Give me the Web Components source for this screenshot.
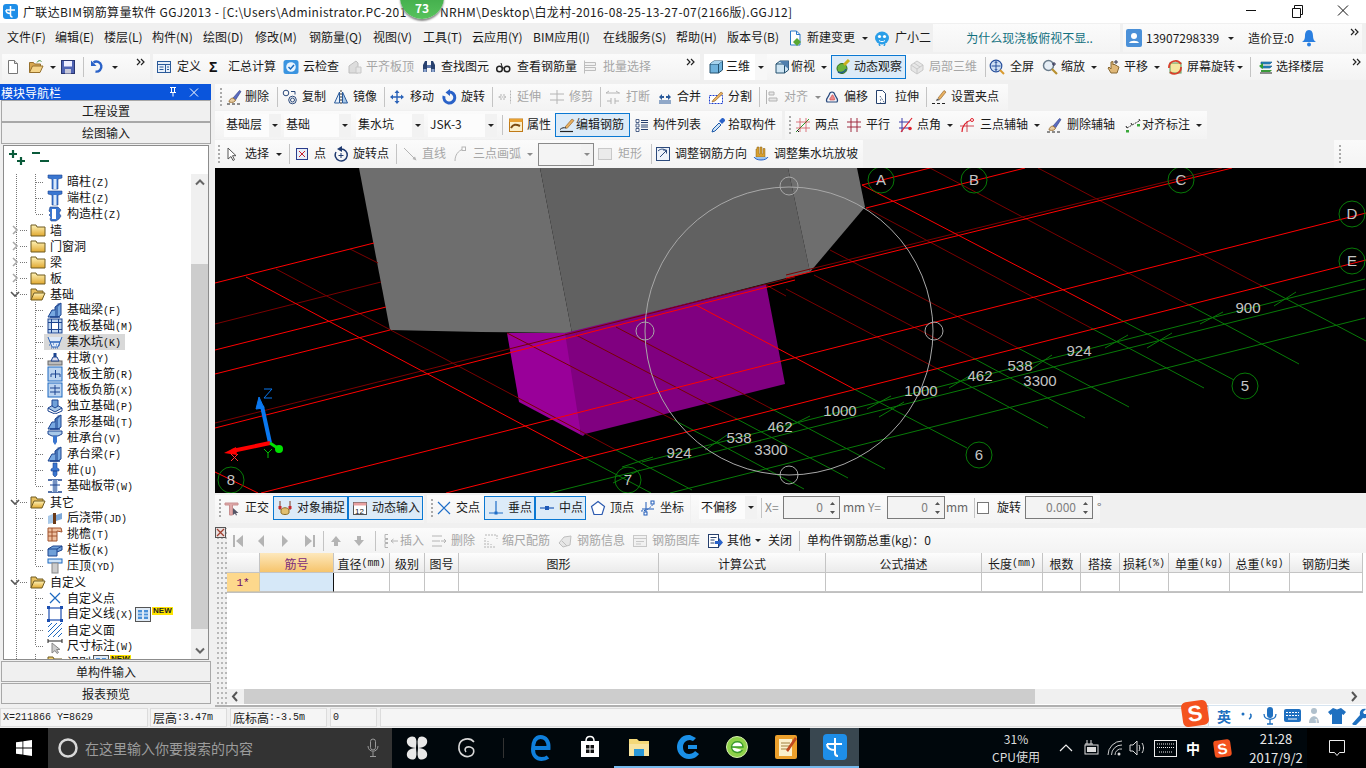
<!DOCTYPE html>
<html lang="zh">
<head>
<meta charset="utf-8">
<title>GGJ2013</title>
<style>
  html, body { margin: 0; padding: 0; }
  body {
    width: 1366px; height: 768px; overflow: hidden; background: #f0f0f0; color: #1a1a1a;
    font: 12px/16px "Noto Sans CJK SC", "Liberation Sans", sans-serif;
    display: flex; flex-direction: column;
  }
</style>
</head>
<body>

<title-bar>
  <span style="letter-spacing:.36px">广联达BIM钢筋算量软件 GGJ2013 - [C:\Users\Administrator.PC-201</span>
  <span style="position:absolute;left:440px;letter-spacing:.36px">NRHM\Desktop\白龙村-2016-08-25-13-27-07(2166版).GGJ12]</span>
</title-bar>

<menu-bar>
  <menu-item style="width:48px">文件(F)</menu-item>
  <menu-item style="width:49px">编辑(E)</menu-item>
  <menu-item style="width:48px">楼层(L)</menu-item>
  <menu-item style="width:51px">构件(N)</menu-item>
  <menu-item style="width:52px">绘图(D)</menu-item>
  <menu-item style="width:54px">修改(M)</menu-item>
  <menu-item style="width:64px">钢筋量(Q)</menu-item>
  <menu-item style="width:50px">视图(V)</menu-item>
  <menu-item style="width:49px">工具(T)</menu-item>
  <menu-item style="width:61px">云应用(Y)</menu-item>
  <menu-item style="width:70px">BIM应用(I)</menu-item>
  <menu-item style="width:73px">在线服务(S)</menu-item>
  <menu-item style="width:51px">帮助(H)</menu-item>
  <menu-item style="width:60px">版本号(B)</menu-item>
  <tool-btn icon="change" style="width:69px">新建变更</tool-btn>
  <tb-caret style="width:18px"></tb-caret>
  <tool-btn icon="robot" style="width:52px;--g:5px">广小二</tool-btn>
  <hint-box>为什么现浇板俯视不显..</hint-box>
  <user-box phone="13907298339" beans="造价豆:0"></user-box>
</menu-bar>

<tool-row style="height:27px;padding-top:1px;margin-bottom:4px">
  <tool-section style="width:148px;margin-left:2px;padding-left:3px">
    <tool-btn icon="new" style="width:23px"></tool-btn>
    <tool-btn icon="open" style="width:17px"></tool-btn>
    <tb-caret style="width:15px"></tb-caret>
    <tool-btn icon="save" style="width:18px"></tool-btn>
    <tb-sep style="width:11px"></tb-sep>
    <tool-btn icon="undo" style="width:18px"></tool-btn>
    <tb-caret style="width:15px"></tb-caret>
    <tb-more></tb-more>
  </tool-section>
  <tool-section style="width:547px;margin-left:3px;padding-left:3px">
    <tool-btn icon="define" style="width:51px;--g:5px">定义</tool-btn>
    <tool-btn icon="sigma" style="width:76px;--g:5px">汇总计算</tool-btn>
    <tool-btn icon="cloud" style="width:64px">云检查</tool-btn>
    <tool-btn icon="flush" disabled style="width:74px;--g:3px">平齐板顶</tool-btn>
    <tool-btn icon="find" style="width:74px">查找图元</tool-btn>
    <tool-btn icon="glasses" style="width:87px;--g:6px">查看钢筋量</tool-btn>
    <tool-btn icon="batch" disabled style="width:72px;--g:5px">批量选择</tool-btn>
    <tb-more></tb-more>
  </tool-section>
  <tool-section style="width:662px;margin-left:4px">
    <tool-btn icon="cube" style="width:51px;height:26px;padding-left:4px;background:#fff;--g:2px">三维</tool-btn>
    <tb-caret style="width:12px;height:26px;background:#f7f7f7"></tb-caret>
    <tool-btn icon="cubet" style="width:44px;margin-left:7px;--g:1px">俯视</tool-btn>
    <tb-caret style="width:12px"></tb-caret>
    <tool-btn icon="orbit" active style="width:75px;margin-left:1px;--g:3px">动态观察</tool-btn>
    <tool-btn icon="local3d" disabled style="width:72px;margin-left:3px">局部三维</tool-btn>
    <tb-sep style="width:8px"></tb-sep>
    <tool-btn icon="full" style="width:53px;--g:5px">全屏</tool-btn>
    <tool-btn icon="zoom" style="width:46px;--g:3px">缩放</tool-btn>
    <tb-caret style="width:12px"></tb-caret>
    <tool-btn icon="pan" style="width:46px;margin-left:5px;--g:3px">平移</tool-btn>
    <tb-caret style="width:12px"></tb-caret>
    <tool-btn icon="screenrot" style="width:68px;margin-left:4px">屏幕旋转</tool-btn>
    <tb-caret style="width:10px"></tb-caret>
    <tb-sep style="width:11px"></tb-sep>
    <tool-btn icon="floors" style="width:72px;margin-left:2px;--g:2px">选择楼层</tool-btn>
    <tb-more></tb-more>
  </tool-section>
</tool-row>

<main-area>
  <nav-panel slot="nav" heading="模块导航栏">
    <nav-tab slot="top">工程设置</nav-tab>
    <nav-tab slot="top">绘图输入</nav-tab>
    <tree-node icon="col" leaf key="Z">暗柱</tree-node>
    <tree-node icon="col" leaf key="Z">端柱</tree-node>
    <tree-node icon="comp" leaf last key="Z">构造柱</tree-node>
    <tree-node>墙</tree-node>
    <tree-node>门窗洞</tree-node>
    <tree-node>梁</tree-node>
    <tree-node>板</tree-node>
    <tree-node open>基础</tree-node>
    <tree-node icon="beam" leaf key="F">基础梁</tree-node>
    <tree-node icon="raft" leaf key="M">筏板基础</tree-node>
    <tree-node icon="pit" leaf selected key="K">集水坑</tree-node>
    <tree-node icon="pier" leaf key="Y">柱墩</tree-node>
    <tree-node icon="rmain" leaf key="R">筏板主筋</tree-node>
    <tree-node icon="rneg" leaf key="X">筏板负筋</tree-node>
    <tree-node icon="iso" leaf key="P">独立基础</tree-node>
    <tree-node icon="beam" leaf key="T">条形基础</tree-node>
    <tree-node icon="capv" leaf key="V">桩承台</tree-node>
    <tree-node icon="beam" leaf key="F">承台梁</tree-node>
    <tree-node icon="pile" leaf key="U">桩</tree-node>
    <tree-node icon="band" leaf last key="W">基础板带</tree-node>
    <tree-node open>其它</tree-node>
    <tree-node icon="post" leaf key="JD">后浇带</tree-node>
    <tree-node icon="eave" leaf key="T">挑檐</tree-node>
    <tree-node icon="para" leaf key="K">栏板</tree-node>
    <tree-node icon="coping" leaf last key="YD">压顶</tree-node>
    <tree-node open>自定义</tree-node>
    <tree-node icon="xpt" leaf>自定义点</tree-node>
    <tree-node icon="xline" leaf key="X" fresh>自定义线</tree-node>
    <tree-node icon="xface" leaf>自定义面</tree-node>
    <tree-node icon="dim" leaf last key="W">尺寸标注</tree-node>
    <tree-node icon="folder" leaf fresh>识别</tree-node>
    <nav-tab slot="bottom">单构件输入</nav-tab>
    <nav-tab slot="bottom">报表预览</nav-tab>
  </nav-panel>

  <tool-row style="height:26px;margin-bottom:1px">
    <tool-section>
      <tb-sep grip style="width:11px"></tb-sep>
      <tool-btn icon="brush" style="width:46px;--g:3px">删除</tool-btn>
      <tb-sep style="width:10px"></tb-sep>
      <tool-btn icon="copy" style="width:51px">复制</tool-btn>
      <tool-btn icon="mirror" style="width:47px">镜像</tool-btn>
      <tb-sep style="width:9px"></tb-sep>
      <tool-btn icon="move" style="width:52px;--g:5px">移动</tool-btn>
      <tool-btn icon="rot" style="width:47px">旋转</tool-btn>
      <tb-sep style="width:9px"></tb-sep>
      <tool-btn icon="extend" disabled style="width:52px">延伸</tool-btn>
      <tool-btn icon="trim" disabled style="width:47px">修剪</tool-btn>
      <tb-sep style="width:9px"></tb-sep>
      <tool-btn icon="brk" disabled style="width:52px;--g:5px">打断</tool-btn>
      <tool-btn icon="merge" style="width:51px">合并</tool-btn>
      <tool-btn icon="split" style="width:47px">分割</tool-btn>
      <tb-sep style="width:9px"></tb-sep>
      <tool-btn icon="align" disabled style="width:48px">对齐</tool-btn>
      <tb-caret style="width:12px;opacity:.5"></tb-caret>
      <tool-btn icon="offset" style="width:49px">偏移</tool-btn>
      <tool-btn icon="stretch" style="width:49px;--g:6px">拉伸</tool-btn>
      <tb-sep style="width:9px"></tb-sep>
      <tool-btn icon="setgrip" style="width:75px">设置夹点</tool-btn>
    </tool-section>
  </tool-row>

  <tool-row style="height:28px;margin-bottom:1px">
    <tool-section style="padding-left:9px">
      <tb-select style="width:57px">基础层</tb-select>
      <tb-select style="width:67px;margin-left:3px">基础</tb-select>
      <tb-select style="width:68px;margin-left:5px">集水坑</tb-select>
      <tb-select style="width:69px;margin-left:4px">JSK-3</tb-select>
      <tb-sep style="width:11px"></tb-sep>
      <tool-btn icon="prop" style="width:46px;--g:3px">属性</tool-btn>
      <tool-btn icon="editbar" active style="width:75px;margin-left:1px;--g:1px">编辑钢筋</tool-btn>
      <tool-btn icon="list" style="width:76px;margin-left:4px;--g:3px">构件列表</tool-btn>
      <tool-btn icon="pick" style="width:70px;--g:2px">拾取构件</tool-btn>
    </tool-section>
    <tool-section style="margin-left:3px">
      <tb-sep grip style="width:10px"></tb-sep>
      <tool-btn icon="twopt" style="width:51px">两点</tool-btn>
      <tool-btn icon="parallel" style="width:52px">平行</tool-btn>
      <tool-btn icon="ptangle" style="width:46px;--g:3px">点角</tool-btn>
      <tb-caret style="width:12px"></tb-caret>
      <tool-btn icon="threept" style="width:72px;margin-left:3px;--g:5px">三点辅轴</tool-btn>
      <tb-caret style="width:12px"></tb-caret>
      <tool-btn icon="brush" style="width:79px;margin-left:3px;--g:5px">删除辅轴</tool-btn>
      <tool-btn icon="dimalign" style="width:68px;--g:1px">对齐标注</tool-btn>
      <tb-caret style="width:12px"></tb-caret>
    </tool-section>
  </tool-row>

  <tool-row style="height:28px">
    <tool-section>
      <tb-sep grip style="width:8px"></tb-sep>
      <tool-btn icon="arrow" style="width:50px;--g:6px">选择</tool-btn>
      <tb-caret style="width:12px"></tb-caret>
      <tb-sep style="width:9px"></tb-sep>
      <tool-btn icon="pointx" style="width:39px">点</tool-btn>
      <tool-btn icon="rotpt" style="width:59px">旋转点</tool-btn>
      <tb-sep style="width:9px"></tb-sep>
      <tool-btn icon="linei" disabled style="width:50px;margin-left:1px">直线</tool-btn>
      <tool-btn icon="arc" disabled style="width:72px;--g:5px">三点画弧</tool-btn>
      <tb-caret style="width:12px;opacity:.5"></tb-caret>
      <tb-select boxed style="width:56px;margin-left:2px"></tb-select>
      <tool-btn icon="rectchk" disabled style="width:50px;margin-left:3px;--g:5px">矩形</tool-btn>
      <tb-sep style="width:8px"></tb-sep>
      <tool-btn icon="adjdir" style="width:98px">调整钢筋方向</tool-btn>
      <tool-btn icon="adjslope" style="width:108px;--g:5px">调整集水坑放坡</tool-btn>
    </tool-section>
    <tool-section style="width:32px;margin-left:auto;padding:0;background:linear-gradient(#fafafa,#f4f4f4)">
      <tb-sep grip style="width:11px"></tb-sep>
    </tool-section>
  </tool-row>

  <drawing-canvas></drawing-canvas>

  <tool-row style="height:28px;margin:2px 0 5px">
    <tool-section style="width:209px;padding-bottom:3px">
      <tb-sep grip style="width:9px"></tb-sep>
      <tool-btn icon="ortho" style="width:47px;--g:5px">正交</tool-btn>
      <tool-btn icon="snapobj" active style="width:75px;margin-left:2px">对象捕捉</tool-btn>
      <tool-btn icon="dyninp" active style="width:75px">动态输入</tool-btn>
    </tool-section>
    <tool-section style="width:263px;margin-left:3px;padding-bottom:3px">
      <tb-sep grip style="width:9px"></tb-sep>
      <tool-btn icon="cross" style="width:48px">交点</tool-btn>
      <tool-btn icon="perp" active style="width:51px">垂点</tool-btn>
      <tool-btn icon="mid" active style="width:51px">中点</tool-btn>
      <tool-btn icon="vertex" style="width:50px;margin-left:4px">顶点</tool-btn>
      <tool-btn icon="coord" style="width:48px">坐标</tool-btn>
    </tool-section>
    <tool-section style="width:409px;margin-left:1px;padding-left:8px;padding-bottom:3px">
      <tb-select style="width:58px">不偏移</tb-select>
      <tb-sep style="width:8px"></tb-sep>
      <tb-label style="width:18px;color:#8a8a8a">X=</tb-label>
      <spin-box style="width:57px" value="0"></spin-box>
      <tb-label style="width:25px;margin-left:3px;color:#666">mm</tb-label>
      <tb-label style="width:19px;color:#8a8a8a">Y=</tb-label>
      <spin-box style="width:58px" value="0"></spin-box>
      <tb-label style="width:26px;margin-left:1px;color:#666">mm</tb-label>
      <tb-sep style="width:5px"></tb-sep>
      <tb-check></tb-check>
      <tb-label style="width:28px;margin-left:8px">旋转</tb-label>
      <spin-box style="width:68px" value="0.000"></spin-box>
      <tb-label style="margin-left:4px;color:#666">°</tb-label>
    </tool-section>
  </tool-row>

  <rebar-panel>
    <tool-row style="height:25px">
      <tool-section style="width:100%;padding-left:3px">
        <tool-btn icon="first" disabled style="width:23px"></tool-btn>
        <tool-btn icon="prev" disabled style="width:24px"></tool-btn>
        <tool-btn icon="next" disabled style="width:25px"></tool-btn>
        <tool-btn icon="last" disabled style="width:17px"></tool-btn>
        <tb-sep style="width:9px"></tb-sep>
        <tool-btn icon="up" disabled style="width:23px"></tool-btn>
        <tool-btn icon="down" disabled style="width:20px"></tool-btn>
        <tb-sep style="width:9px"></tb-sep>
        <tool-btn icon="ins" disabled style="width:48px;margin-left:3px;--g:1px">插入</tool-btn>
        <tool-btn icon="rem" disabled style="width:52px">删除</tool-btn>
        <tool-btn icon="scale" disabled style="width:74px;--g:3px">缩尺配筋</tool-btn>
        <tool-btn icon="info" disabled style="width:75px">钢筋信息</tool-btn>
        <tool-btn icon="lib" disabled style="width:75px">钢筋图库</tool-btn>
        <tool-btn icon="other" style="width:46px">其他</tool-btn>
        <tb-caret style="width:9px"></tb-caret>
        <tb-label style="width:28px;margin-left:6px">关闭</tb-label>
        <tb-sep style="width:6px"></tb-sep>
        <tb-label style="margin-left:5px">单构件钢筋总重(kg)：0</tb-label>
      </tool-section>
    </tool-row>
    <rebar-grid></rebar-grid>
  </rebar-panel>
</main-area>

<stat-bar>
  <stat-cell style="width:148px" mono>X=211866 Y=8629</stat-cell>
  <stat-cell style="width:77px;margin-left:2px" label="层高" mono>:3.47m</stat-cell>
  <stat-cell style="width:97px;margin-left:3px" label="底标高" mono>:-3.5m</stat-cell>
  <stat-cell style="width:47px;margin-left:3px" mono>0</stat-cell>
  <stat-cell style="flex:1;margin-left:3px"></stat-cell>
</stat-bar>
<ime-bar></ime-bar>

<win-taskbar></win-taskbar>

<script>
// ---- iconos compartidos, todos en una caja de 16x16 ----
const ICONS = {
  new: `<path d="M3.5 1.5h6l3 3v10h-9z" fill="#fff" stroke="#777"/><path d="M9.5 1.5v3h3" fill="#ddd" stroke="#777"/>`,
  open: `<path d="M1.5 13.5v-10h4l1 1.5h6v2" fill="#d8a850" stroke="#96702c"/><path d="M1.5 13.5l3-6.5h10.5l-3 6.5z" fill="#f4d488" stroke="#96702c"/><path d="M9 3.5c1-2 3-2.500 4.500-1" fill="none" stroke="#3f8f3f"/>`,
  save: `<rect x="1.500" y="1.500" width="13" height="13" fill="#5064b4" stroke="#2a3670"/><rect x="4" y="2" width="8" height="5.500" fill="#eef"/><rect x="5" y="10" width="6" height="4.500" fill="#c8c8d8"/>`,
  undo: `<path d="M4.500 3.500a5 5 0 1 1 2 9" fill="none" stroke="#2a62c8" stroke-width="2.400"/><path d="M2 1.500v5.500h5.500z" fill="#2a62c8"/>`,
  define: `<rect x="1.500" y="2.500" width="13" height="11" fill="#e8f0fa" stroke="#2a5a9a"/><path d="M1.500 5.500h13M9.500 5.500v8M3.500 8h4M3.500 10.500h4M11 8h2M11 10.500h2" stroke="#2a5a9a" fill="none"/>`,
  sigma: `<text x="2" y="13" font-size="14" font-weight="bold" font-family="Liberation Sans" fill="#111">Σ</text>`,
  cloud: `<rect x=".5" y="1" width="15" height="14" rx="2.500" fill="#3a94e0"/><circle cx="8" cy="8" r="4.800" fill="#e8f4ff"/><path d="M5.500 8l2 2 3.500-4" stroke="#1a6cc0" stroke-width="1.500" fill="none"/>`,
  flush: `<path d="M2 14V7l7-5 2 2v10z" fill="#ccc" stroke="#999"/><path d="M9 8h5v6H9z" fill="#ddd" stroke="#aaa"/>`,
  find: `<path d="M2 13V6l2-4h2v11zM14 13V6l-2-4h-2v11z" fill="#27406e"/><rect x="6" y="6" width="4" height="3" fill="#5c76a8"/><rect x="2.500" y="10" width="3" height="3" fill="#8aa2cc"/><rect x="10.500" y="10" width="3" height="3" fill="#8aa2cc"/>`,
  glasses: `<circle cx="4.500" cy="10" r="2.800" fill="none" stroke="#222" stroke-width="1.500"/><circle cx="12" cy="10" r="2.800" fill="none" stroke="#222" stroke-width="1.500"/><path d="M7 9h2.500M7.500 9L6 4" stroke="#222" fill="none"/>`,
  batch: `<path d="M2.500 1.500v13M2.500 3.500h11v3h-11M2.500 8.500h11v3h-11" stroke="#999" fill="#eee"/>`,
  cube: `<path d="M2 5l4-3h8.500v9L10.500 14H2z" fill="#6fb2dc" stroke="#24506e"/><path d="M2 5h8.500v9M10.500 5l4-3" fill="none" stroke="#24506e"/><path d="M2 5l4-3h8.500l-4 3z" fill="#a8d4ee"/>`,
  cubet: `<path d="M2 5l4-3h8.500v9L10.500 14H2z" fill="#cfe5f3" stroke="#24506e"/><path d="M2 5h8.500v9M10.500 5l4-3" fill="none" stroke="#24506e"/><path d="M5 2h9.500v8z" fill="#4f7fae"/>`,
  orbit: `<circle cx="7" cy="9.500" r="5" fill="#6cb33a" stroke="#2f6d1c"/><path d="M9 6l5-5" stroke="#c9b01c" stroke-width="3"/><path d="M3 13c3 1.500 7 0 8-3" stroke="#1f5a8c" fill="none" stroke-width="1.500"/>`,
  local3d: `<path d="M2 6l6-4 6 4v5l-6 4-6-4z" fill="#ddd" stroke="#aaa"/><path d="M2 6l6 4 6-4M8 10v5M5 4l6 4" stroke="#aaa" fill="none"/>`,
  full: `<circle cx="7" cy="7" r="5.800" fill="#cfe0f4" stroke="#28509c" stroke-width="1.200"/><path d="M7 2.500v9M2.500 7h9M7 2.500L5.800 4M7 2.500L8.200 4M7 11.500L5.800 10M7 11.500L8.200 10" stroke="#28509c" fill="none"/><path d="M11 11l4 4" stroke="#d89a30" stroke-width="2"/>`,
  zoom: `<circle cx="6.500" cy="6.500" r="5" fill="#e6eef6" stroke="#6a7c8c" stroke-width="1.500"/><path d="M10 10l5 5" stroke="#b89030" stroke-width="2.200"/><path d="M12 3v4M10 5h4" stroke="#335" stroke-width="1"/>`,
  pan: `<path d="M3 9l3 5h6l2-6-2-1-1-1-1 0-1-1-1 1V2.500L6 3v7L4 8z" fill="#e0b878" stroke="#8a6a34"/><path d="M11 1v4M9 3h4" stroke="#334" fill="none"/>`,
  screenrot: `<rect x="3" y="4" width="11" height="10" fill="#f6e6a0" stroke="#5a9a5a"/><path d="M2 9a6.500 6.500 0 0 1 12-4" fill="none" stroke="#d8402c" stroke-width="1.800"/><path d="M14 8a6.500 6.500 0 0 1-11 5" fill="none" stroke="#d8402c" stroke-width="1.800"/>`,
  floors: `<path d="M3 3h11l-2 2H3zM3 7h11l-2 2H3z" fill="#2a8ac8" stroke="#14507c" stroke-width=".6"/><path d="M3 11h11l-2 2H3z" fill="#3a9a3a"/><path d="M1 7l4-3v6z" fill="#2f9f2f"/><path d="M2 14h12" stroke="#222"/>`,
  change: `<path d="M3.500 1h6l3.500 3.500V15H3.500z" fill="#fff" stroke="#2a78c8"/><path d="M9.500 1v3.500H13" fill="none" stroke="#2a78c8"/><path d="M10 8l4 4-4 4-4-4z" fill="#5aa832"/>`,
  robot: `<ellipse cx="8" cy="8" rx="7" ry="6.500" fill="#2a9ee8"/><circle cx="5.500" cy="6.500" r="1.600" fill="#fff"/><circle cx="10.500" cy="6.500" r="1.600" fill="#fff"/><path d="M5 10.500c2 1.500 4 1.500 6 0" stroke="#fff" fill="none"/><path d="M5 14l1 2M11 14l-1 2" stroke="#2a9ee8" stroke-width="1.500"/>`,
  brush: `<path d="M7 9L13.500 1.500l1.500 1L9.500 11z" fill="#5a6cc0" stroke="#2c3a80" stroke-width=".6"/><path d="M3 13c0-2 2-4 4-4l2.500 2c-.5 2-2.500 3-6.500 2z" fill="#e8cca0" stroke="#a07840"/><path d="M1 15h3M6 15h3M11 15h3" stroke="#222"/>`,
  copy: `<circle cx="4" cy="4" r="2.800" fill="none" stroke="#2c4a7c"/><circle cx="10.500" cy="11" r="3.800" fill="none" stroke="#2c4a7c"/><circle cx="10.500" cy="11" r="2" fill="none" stroke="#2c4a7c"/><path d="M9 2.500h4v3" fill="none" stroke="#2c4a7c"/>`,
  mirror: `<path d="M6.500 3v11H1.500z" fill="#e6f0fa" stroke="#2a5a9a"/><path d="M9.500 3v11h5z" fill="#a8c8e8" stroke="#2a5a9a"/><path d="M8 1v14" stroke="#333" stroke-dasharray="2 1"/>`,
  move: `<path d="M8 1l2.500 3h-1.800v3.300H12V5.500L15 8l-3 2.500V8.700H8.700V12h1.800L8 15l-2.500-3h1.800V8.700H4v1.800L1 8l3-2.500v1.800h3.300V4H5.500z" fill="#2a62b8"/>`,
  rot: `<path d="M3 7a5.500 5.500 0 1 0 5-4" fill="none" stroke="#2a62c8" stroke-width="3"/><path d="M9 0v7L4.500 3.500z" fill="#2a62c8"/>`,
  extend: `<path d="M1.500 8H9M3 6h5v4H3zM13.500 1.500v13" stroke="#888" fill="none" stroke-dasharray="2 1"/>`,
  trim: `<path d="M1 5h14M1 11h14M8 1v14" stroke="#888" fill="none"/>`,
  brk: `<path d="M1 4l3-2M1 4h14M11 2l3 2M2 12h4M10 12h4M6 9v6M10 9v6" stroke="#888" fill="none"/>`,
  merge: `<path d="M2 12h12M2 14h12" stroke="#2a5a9a" fill="none"/><path d="M2 8l3-3v2h2v2H5v2zM14 8l-3-3v2H9v2h2v2z" fill="#2a5a9a"/>`,
  split: `<path d="M1.500 6.500h13v8h-13z" fill="#fff" stroke="#1a3cd0" stroke-dasharray="2 1"/><path d="M5 11L13 3l2 1.500L7 12l-3 1z" fill="#e8b060" stroke="#8a5a20" stroke-width=".6"/>`,
  align: `<path d="M2.500 1v14M5 3h5v3H5zM5 9h8v3H5z" stroke="#888" fill="#ddd"/>`,
  offset: `<path d="M3 13c-2-3 1-4 2-7 1-4 5-4 6 0 1 3 4 4 2 7z" fill="#f0f4fa" stroke="#2a4a7c" stroke-width="1.200"/><path d="M6 11c-1-2 1-2 1.500-4 .5-1.500 1.500-1.500 2 0 .5 2 2 2 1 4z" fill="#e88" stroke="#c44" stroke-width=".6"/>`,
  stretch: `<path d="M3.500 1.500h6l3 3v10h-9z" fill="#fff" stroke="#24406c"/><path d="M7 7l5 7.500M7 11h1M7 14h1" stroke="#24406c" stroke-dasharray="1 1" fill="none"/>`,
  setgrip: `<path d="M7 9l6-7.500 2 1.500L9 10.500z" fill="#e8b060" stroke="#8a5a20" stroke-width=".6"/><path d="M6 9.500l3 1.500-4 1z" fill="#555"/><path d="M1 14.500h3M6 14.500h3M11 14.500h3" stroke="#222"/>`,
  prop: `<rect x="1.500" y="2" width="13" height="12.500" fill="#fbeec8" stroke="#c07a18"/><path d="M1.500 2h13v3h-13z" fill="#e8a030"/><path d="M3 11c2-4 5-4 9-2" stroke="#7a4a10" stroke-width="2" fill="none"/>`,
  editbar: `<path d="M6 10L13 2l2 1.500L8 11.500z" fill="#e8b060" stroke="#8a5a20" stroke-width=".6"/><path d="M1 12.500c2-2 4-2 6-1.500" stroke="#222" fill="none"/><path d="M1 14.500h13" stroke="#222" stroke-width="1.200"/>`,
  list: `<path d="M2 2.500h3v3H2zM2 7h3v3H2zM2 11.500h3v3H2z" fill="#fff" stroke="#27406e" stroke-width=".8"/><path d="M7 3.500h7M7 5.500h7M7 8h7M7 10h7M7 12.500h7" stroke="#27406e"/>`,
  pick: `<path d="M2 15l1-3 6-6 2 2-6 6z" fill="#cfe4f8" stroke="#1f5aa8"/><path d="M9 4l3-3c1.500-.5 3.500 1.500 3 3l-3 3z" fill="#2a62c8"/>`,
  twopt: `<path d="M1 15L14 2" stroke="#2a9a2a"/><path d="M5 1v14M11 1v14M1 5h14M1 11h14" stroke="#c8202c" stroke-width=".8" opacity=".75"/><path d="M2 13l2 2" stroke="#111"/>`,
  parallel: `<path d="M1 5h14M1 10h14M5 1v14M11 1v14" stroke="#a02c40" fill="none"/>`,
  ptangle: `<path d="M1 5h11M1 11h11M4 1v14" stroke="#3a3aa8" fill="none"/><path d="M3 15L14 1" stroke="#e0202c" stroke-width="1.200"/><circle cx="12" cy="11.500" r="1.800" fill="#e0202c"/>`,
  threept: `<path d="M3 15c0-6 4-11 10-12" stroke="#e0202c" fill="none" stroke-width="1.200"/><path d="M1 9h14M8 4v11" stroke="#c8202c" stroke-width=".8"/><circle cx="13" cy="3" r="1.500" fill="#fff" stroke="#e0202c"/>`,
  dimalign: `<path d="M2 11L14 4" stroke="#333" stroke-dasharray="2 1"/><path d="M1 9l1 2M14 2l1 2M6 6l1 2" stroke="#222"/><rect x="1" y="13" width="3" height="2.500" fill="#3aa83a"/><rect x="12" y="7" width="3" height="2.500" fill="#3aa83a"/>`,
  arrow: `<path d="M5 2v11l3-2.500 2 4 1.500-.8-2-4h3.500z" fill="#fff" stroke="#555"/>`,
  pointx: `<rect x="2.500" y="2.500" width="11" height="11" fill="#e8eef8" stroke="#2a3c8c"/><path d="M5 5l6 6M11 5l-6 6" stroke="#c8202c"/>`,
  rotpt: `<path d="M3 6a6 6 0 1 0 5-3" fill="none" stroke="#1f3a70" stroke-width="1.500"/><path d="M9 0v6L4 3z" fill="#1f3a70"/><path d="M8 7v5M5.500 9.500h5" stroke="#1f3a70"/>`,
  linei: `<path d="M2 2l11 11" stroke="#888"/><path d="M14.500 14.500l-4-1.500 2.500-2.500z" fill="#888"/>`,
  arc: `<path d="M3 15c0-6 3-10 8-12" stroke="#888" fill="none"/><rect x="10" y="1" width="3.500" height="3.500" fill="#fff" stroke="#888"/>`,
  rectchk: `<rect x="1.500" y="2.500" width="13" height="11" fill="#e4e4e4" stroke="#aaa"/>`,
  adjdir: `<rect x="1.500" y="1.500" width="13" height="13" fill="#eef3fa" stroke="#2c4a7c"/><path d="M5 11l6-6M8 4h3.500v3.500M3 5c3-3 7-2 8 0" stroke="#2c4a7c" fill="none"/>`,
  adjslope: `<path d="M4 1h2v7h1V1h2v7h1V2.500h2V11H3V3h1z" fill="#d8a030" stroke="#8a6018" stroke-width=".5"/><path d="M1 11c2 4 12 4 14 0" fill="#9cc4ee" stroke="#2a62c8"/>`,
  ortho: `<path d="M1 3h13v2H8.500v10h-3V5H1z" fill="#e0a8a8" stroke="#c89090"/><path d="M9 8v7l2-1.500 1 2 1-.5-1-2h2.500z" fill="#556" />`,
  snapobj: `<path d="M3 1v9M13 1v9" stroke="#7a3a20"/><rect x="1.500" y="6" width="3" height="3" fill="#c8282c"/><rect x="11.500" y="6" width="3" height="3" fill="#c8282c"/><path d="M4 10c1-3 7-3 8 0v3c-1 2-7 2-8 0z" fill="#e2c070" stroke="#8a6a24"/>`,
  dyninp: `<rect x="1.500" y="2.500" width="13" height="12" fill="#fff" stroke="#555"/><path d="M1.500 2.500h13v3h-13z" fill="#e8a0a0"/><text x="3" y="13.500" font-size="8" font-family="Liberation Sans" fill="#222">12</text>`,
  cross: `<path d="M2 2l12 12M14 2L2 14" stroke="#1f6ec8" stroke-width="1.200"/>`,
  perp: `<path d="M8 1v12M1 13h14" stroke="#1f6ec8" stroke-width="1.200"/><rect x="6.500" y="11.500" width="3" height="3" fill="#1f6ec8"/>`,
  mid: `<path d="M1 8h14" stroke="#1f5ab8" stroke-width="1.200"/><rect x="6" y="6" width="4" height="4" fill="#1f5ab8"/>`,
  vertex: `<path d="M8 1.500l6.500 5-2.500 8H4l-2.500-8z" fill="#fff" stroke="#2c5ab0" stroke-width="1.200"/>`,
  coord: `<path d="M1 11c4 0 9-2 13-8" stroke="#1f5ab8" fill="none" stroke-dasharray="2 1"/><path d="M6 2v12M2 9h12" stroke="#1f5ab8"/><rect x="11" y="1" width="3" height="3" fill="#fff" stroke="#1f5ab8"/><rect x="4" y="12" width="3" height="3" fill="#fff" stroke="#1f5ab8"/>`,
  first: `<path d="M3 2h2v12H3zM13 2v12L6 8z" fill="#888"/>`,
  prev: `<path d="M11 2v12L5 8z" fill="#888"/>`,
  next: `<path d="M5 2v12l6-6z" fill="#888"/>`,
  last: `<path d="M3 2v12l7-6zM11 2h2v12h-2z" fill="#888"/>`,
  up: `<path d="M8 3l5 6h-3v4H6V9H3z" fill="#888"/>`,
  down: `<path d="M8 13l5-6h-3V3H6v4H3z" fill="#888"/>`,
  ins: `<path d="M5 1.500h-3v4h3M5 10.500h-3v4h3M5 6.500h-3v3h3" stroke="#888" fill="none"/><path d="M8 8h7M8 8l2.500-2M8 8l2.500 2" stroke="#888" fill="none"/>`,
  rem: `<path d="M1 3h10M1 8h8M1 13h10" stroke="#888" fill="none"/><path d="M10 8h5M15 8l-2-2M15 8l-2 2" stroke="#888" fill="none"/>`,
  scale: `<path d="M2 15V5M5 15V8M8 15v-4M11 15v-2M2 2h12M14 2v4" stroke="#888" stroke-dasharray="2 1" fill="none"/>`,
  info: `<path d="M2 10l5-6 7-1-1 9-7 2z" fill="#ddd" stroke="#999"/><path d="M5 8l5 5" stroke="#999"/>`,
  lib: `<rect x="1.500" y="2.500" width="13" height="11" fill="#eee" stroke="#aaa"/><path d="M1.500 5.500h13M4 8.500h8M4 11h5" stroke="#aaa"/>`,
  other: `<rect x="1.500" y="1.500" width="10" height="13" fill="#fff" stroke="#27406e"/><path d="M3.500 4.500h6M3.500 7h4M3.500 10h4" stroke="#27406e"/><path d="M8 8h4V5l4 4.500-4 4.500v-3H8z" fill="#2a62c8"/>`,
  col: `<path d="M1 1h14v3l-4 1v10H5V5L1 4z" fill="#3a76d0" stroke="#1c4490" stroke-width=".6"/><path d="M6.500 5h3v10h-3z" fill="#dbe9fa"/>`,
  comp: `<path d="M3 1h8l3 3-2 3 2 3-2 3-3 2H4l-1-2 1-2-2-2 2-2-2-2z" fill="#3a76d0" stroke="#1c4490" stroke-width=".6"/><path d="M5 3h4v10H5z" fill="#fff"/>`,
  beam: `<path d="M1 15l4-7h3V5l6-4v12l-3 2z" fill="#78a8e0" stroke="#1c4490"/><path d="M8 5l3-4h3l-3 4v10H8z" fill="#1c4490" opacity=".55"/><path d="M3 15h10" stroke="#1c4490" stroke-width="1.500"/>`,
  raft: `<rect x="1" y="1" width="14" height="14" fill="#bcd4f0" stroke="#1c4490"/><rect x="4.500" y="4.500" width="7" height="7" fill="#fff" stroke="#1c4490"/><path d="M1 4.500h3.500M11.500 4.500H15M1 11.500h3.500M11.500 11.500H15M4.500 1v3.500M11.500 1v3.500M4.500 11.500V15M11.500 11.500V15" stroke="#1c4490"/>`,
  pit: `<path d="M1 3l2 5h10l2-5M3 8h10l-2 5H5z" fill="#dde9f8" stroke="#2a62b8"/><path d="M4 14h8M2 11h2M12 11h2M6 10h1M9 11h1" stroke="#2a62b8" stroke-dasharray="1 1"/>`,
  pier: `<rect x="1" y="11" width="14" height="4" fill="#bbb" stroke="#666"/><path d="M4 11l2-4h4l2 4z" fill="#dde" stroke="#1c4490"/><rect x="6.500" y="3" width="3" height="4" fill="#1c4490"/>`,
  rmain: `<rect x="1" y="1" width="14" height="14" fill="#bcd4f0" stroke="#1c68c0"/><path d="M4 8h9M8.500 4v8M4 8v3M13 8v3" stroke="#1c4490" fill="none"/>`,
  rneg: `<rect x="1" y="1" width="14" height="14" fill="#bcd4f0" stroke="#1c68c0"/><path d="M3 6h10M3 10h10M8 3v10" stroke="#1c4490" fill="none"/>`,
  iso: `<path d="M1 10l7-4 7 4-7 4z" fill="#a8c8e8" stroke="#1c4490"/><path d="M5 8V2h6v6l-3 2z" fill="#6fa0d8" stroke="#1c4490"/><path d="M1 10v3l7 3 7-3v-3" fill="none" stroke="#1c4490"/>`,
  capv: `<path d="M1 1h14v3l-4 2H5L1 4z" fill="#a8c8e8" stroke="#1c4490"/><path d="M6 6h4v6l-2 3-2-3z" fill="#3a76d0"/>`,
  pile: `<path d="M6 1h4v5l2 1v2H4V7l2-1zM6 9h4v4l-2 2-2-2z" fill="#3a76d0" stroke="#1c4490" stroke-width=".6"/>`,
  band: `<path d="M1 2h14M1 14h14" stroke="#1c4490" stroke-width="1.500"/><path d="M5 2h6v12H5z" fill="#cfe0f4"/><path d="M7 2v12M9 2v12M3 7h10" stroke="#1c4490"/>`,
  post: `<path d="M1 6l5-2v9l-5 1z" fill="#a8c8e8"/><path d="M6 3h3v11H6z" fill="#6a3a18"/><path d="M9 5l6-2v6l-6 2z" fill="#7ea8d8"/>`,
  eave: `<path d="M1 2h13l1 4-5-1v10H1z" fill="#eec0a0" stroke="#a0522d"/><path d="M1 6h9M1 10h9M5 2v13" stroke="#a0522d"/>`,
  para: `<path d="M1 7l5-3h9v4l-5 2v4H1z" fill="#6fa0d8" stroke="#1c4490"/><path d="M1 7h9v3M10 7l5-3" stroke="#1c4490" fill="none"/>`,
  coping: `<rect x="1" y="1" width="14" height="4" fill="#cfe4f8" stroke="#1c68c0"/><rect x="5" y="5" width="6" height="10" fill="#ccc" stroke="#888"/>`,
  xpt: `<path d="M3 3l10 10M13 3L3 13" stroke="#1c68c0" stroke-width="1.200"/>`,
  xline: `<rect x="2" y="2" width="12" height="12" fill="none" stroke="#1c4eb0" stroke-width="1.200"/><path d="M0 0h3v3H0zM13 0h3v3h-3zM0 13h3v3H0zM13 13h3v3h-3z" fill="#1c4eb0"/>`,
  xface: `<path d="M1 5l4-4M1 10l9-9M1 15L15 1M6 15l9-9M11 15l4-4" stroke="#1c68c0"/>`,
  dim: `<path d="M1 1v4M15 1v4M1 3h14" stroke="#222"/><path d="M5 5v10l3-2.500 2 3 1.500-1-2-3h3.500z" fill="#ccc" stroke="#888"/>`,
  folder: `<path d="M1 14V3h5l1 2h8v9z" fill="#f0cf70" stroke="#6e5a20"/>`
};

function iconSvg(name, size) {
  const s = size || 16;
  return `<svg width="${s}" height="${s}" viewBox="0 0 16 16" style="flex:none;display:block">${ICONS[name] || ''}</svg>`;
}

// Barra de título
class TitleBar extends HTMLElement {
  constructor() {
    super();
    this.attachShadow({ mode: 'open' });
    this.shadowRoot.innerHTML = `
      <style>
        :host { display: flex; align-items: center; height: 23px; background: #fff; flex: none; position: relative; white-space: nowrap; overflow: hidden; }
        .logo { margin: 0 5px 0 3px; }
        .txt { display: contents; }
        .win { margin-left: auto; display: flex; }
        .win svg { width: 46px; height: 23px; }
        .badge { position: absolute; left: 400px; top: -25px; width: 44px; height: 44px; border-radius: 50%; background: linear-gradient(#2f9a3c, #57c25c); box-shadow: 0 2px 2px #8a8a8a; color: #fff; font-weight: bold; text-align: center; line-height: 16px; }
        .badge span { position: absolute; left: 0; right: 0; top: 25px; }
      </style>
      <svg class="logo" width="15" height="15" viewBox="0 0 15 15"><rect width="15" height="15" rx="3" fill="#1e8ee8"/><path d="M7.500 2v9a2 2 0 0 0 2 2M3 6h9M3 6c0 3 2 3.500 4.500 3.500" stroke="#fff" stroke-width="1.500" fill="none"/></svg>
      <span class="txt"><slot></slot></span>
      <div class="win">
        <svg viewBox="0 0 46 23"><path d="M18 10.500h10" stroke="#111"/></svg>
        <svg viewBox="0 0 46 23"><path d="M18.500 8.500h8v9h-8zM20.500 8.500v-3h8v9h-2" stroke="#111" fill="none"/></svg>
        <svg viewBox="0 0 46 23"><path d="M18 5.500l10 10M28 5.500l-10 10" stroke="#111" fill="none"/></svg>
      </div>
      <div class="badge"><span>73</span></div>
    `;
  }
}
customElements.define('title-bar', TitleBar);

// Barra de menú
class MenuBar extends HTMLElement {
  constructor() {
    super();
    this.attachShadow({ mode: 'open' });
    this.shadowRoot.innerHTML = `
      <style>:host { display: flex; align-items: center; height: 30px; padding-left: 7px; flex: none; white-space: nowrap; }</style>
      <slot></slot>
    `;
  }
}
customElements.define('menu-bar', MenuBar);

class MenuItem extends HTMLElement {
  constructor() {
    super();
    this.attachShadow({ mode: 'open' });
    this.shadowRoot.innerHTML = `<style>:host { display: block; flex: none; white-space: nowrap; margin-top: -2px; }</style><slot></slot>`;
  }
}
customElements.define('menu-item', MenuItem);

class HintBox extends HTMLElement {
  constructor() {
    super();
    this.attachShadow({ mode: 'open' });
    this.shadowRoot.innerHTML = `
      <style>:host { display: flex; align-items: center; justify-content: center; flex: none; width: 187px; height: 28px; margin-left: 7px; padding-left: 6px; box-sizing: border-box; color: #12707e; background: linear-gradient(#fbfbfb, #f4f4f4); }</style>
      <slot></slot>
    `;
  }
}
customElements.define('hint-box', HintBox);

class UserBox extends HTMLElement {
  constructor() {
    super();
    this.attachShadow({ mode: 'open' });
  }
  connectedCallback() {
    this.shadowRoot.innerHTML = `
      <style>
        :host { display: flex; align-items: center; flex: none; width: 239px; height: 28px; margin-left: 3px; padding-left: 3px; box-sizing: border-box; background: linear-gradient(#fbfbfb, #f4f4f4); position: relative; }
        .ph { margin-left: 4px; width: 80px; }
        .bn { margin-left: 12px; width: 54px; }
        tb-caret { width: 18px; }
      </style>
      <svg width="16" height="18" viewBox="0 0 16 18"><rect width="16" height="18" rx="2" fill="#4a90d8"/><circle cx="8" cy="7" r="3" fill="#fff"/><path d="M3 14c1-3 9-3 10 0z" fill="#fff"/></svg>
      <span class="ph">${this.getAttribute('phone')}</span>
      <tb-caret style="width:10px"></tb-caret>
      <span class="bn">${this.getAttribute('beans')}</span>
      <svg width="14" height="18" viewBox="0 0 14 18"><path d="M7 1c3 0 4 3 4 6s1 5 3 6H0c2-1 3-3 3-6s1-6 4-6z" fill="#2a7fe0"/><circle cx="7" cy="15.500" r="2" fill="#2a7fe0"/></svg>
      <tb-more></tb-more>
    `;
  }
}
customElements.define('user-box', UserBox);

// Contenedores de barras de herramientas
class ToolRow extends HTMLElement {
  constructor() {
    super();
    this.attachShadow({ mode: 'open' });
    this.shadowRoot.innerHTML = `
      <style>:host { display: flex; flex: none; align-items: stretch; box-sizing: border-box; }</style>
      <slot></slot>
    `;
  }
}
customElements.define('tool-row', ToolRow);

class ToolSection extends HTMLElement {
  constructor() {
    super();
    this.attachShadow({ mode: 'open' });
    this.shadowRoot.innerHTML = `
      <style>:host { display: flex; align-items: center; flex: none; box-sizing: border-box; padding-right: 2px; background: linear-gradient(#fbfbfb, #f3f3f3); white-space: nowrap; }</style>
      <slot></slot>
    `;
  }
}
customElements.define('tool-section', ToolSection);

// Botón con icono y texto
class ToolBtn extends HTMLElement {
  constructor() {
    super();
    this.attachShadow({ mode: 'open' });
  }
  connectedCallback() {
    this.shadowRoot.innerHTML = `
      <style>
        :host { display: inline-flex; align-items: center; flex: none; height: 22px; box-sizing: border-box; white-space: nowrap; }
        :host([disabled]) { color: #a6a6a6; }
        :host([disabled]) svg { filter: grayscale(1); opacity: .6; }
        :host([active]) { height: 24px; padding-left: 3px; border: 1px solid #0a78d2; background: #dcebf8; }
        span { margin-left: var(--g, 4px); margin-top: -2px; }
      </style>
      ${iconSvg(this.getAttribute('icon'))}<span><slot></slot></span>
    `;
  }
}
customElements.define('tool-btn', ToolBtn);

class TbSep extends HTMLElement {
  constructor() {
    super();
    this.attachShadow({ mode: 'open' });
    this.shadowRoot.innerHTML = `
      <style>
        :host { display: flex; justify-content: center; flex: none; height: 100%; align-items: center; }
        i { display: block; width: 1px; height: 20px; background: #c4c4c4; }
        :host([grip]) i { width: 2px; height: 18px; background: repeating-linear-gradient(#aaa 0 2px, transparent 2px 4px); }
      </style>
      <i></i>
    `;
  }
}
customElements.define('tb-sep', TbSep);

class TbCaret extends HTMLElement {
  constructor() {
    super();
    this.attachShadow({ mode: 'open' });
    this.shadowRoot.innerHTML = `
      <style>
        :host { display: flex; justify-content: center; align-items: center; flex: none; }
        i { border: 3px solid transparent; border-top: 3.500px solid #222; border-bottom: 0; }
      </style>
      <i></i>
    `;
  }
}
customElements.define('tb-caret', TbCaret);

class TbMore extends HTMLElement {
  constructor() {
    super();
    this.attachShadow({ mode: 'open' });
    this.shadowRoot.innerHTML = `
      <style>
        :host { margin-left: auto; margin-right: 3px; align-self: flex-start; margin-top: 4px; display: block; }
        svg { display: block; }
      </style>
      <svg width="9" height="8" viewBox="0 0 9 8"><path d="M1 1l3 3-3 3M5 1l3 3-3 3" stroke="#222" fill="none" stroke-width="1.200"/></svg>
    `;
  }
}
customElements.define('tb-more', TbMore);

class TbSelect extends HTMLElement {
  constructor() {
    super();
    this.attachShadow({ mode: 'open' });
    this.shadowRoot.innerHTML = `
      <style>
        :host { display: flex; align-items: center; flex: none; box-sizing: border-box; height: 23px; background: #fcfcfc; }
        :host([boxed]) { border: 1px solid #8a8a8a; background: #f4f4f4; }
        :host([boxed]) tb-caret { opacity: .5; }
        .t { flex: 1; padding-left: 2px; overflow: hidden; white-space: nowrap; margin-top: -2px; }
        tb-caret { width: 12px; height: 100%; background: #f2f2f2; }
      </style>
      <span class="t"><slot></slot></span><tb-caret></tb-caret>
    `;
  }
}
customElements.define('tb-select', TbSelect);

class TbLabel extends HTMLElement {
  constructor() {
    super();
    this.attachShadow({ mode: 'open' });
    this.shadowRoot.innerHTML = `<style>:host { display: block; flex: none; white-space: nowrap; margin-top: -2px; }</style><slot></slot>`;
  }
}
customElements.define('tb-label', TbLabel);

class TbCheck extends HTMLElement {
  constructor() {
    super();
    this.attachShadow({ mode: 'open' });
    this.shadowRoot.innerHTML = `<style>:host { display: block; flex: none; width: 12px; height: 12px; box-sizing: border-box; border: 1px solid #777; background: #fff; }</style>`;
  }
}
customElements.define('tb-check', TbCheck);

class SpinBox extends HTMLElement {
  constructor() {
    super();
    this.attachShadow({ mode: 'open' });
  }
  connectedCallback() {
    this.shadowRoot.innerHTML = `
      <style>
        :host { display: flex; flex: none; align-items: center; height: 23px; box-sizing: border-box; border: 1px solid #7a7a7a; background: #f3f3f3; color: #808080; }
        span { flex: 1; text-align: right; padding-right: 6px; margin-top: -2px; }
        svg { flex: none; margin-right: 3px; }
      </style>
      <span>${this.getAttribute('value')}</span>
      <svg width="7" height="17" viewBox="0 0 7 17"><path d="M3.500 3L6 6H1zM3.500 15L1 12h5z" fill="#555"/></svg>
    `;
  }
}
customElements.define('spin-box', SpinBox);

// Zona principal: panel de navegación a la izquierda y trabajo a la derecha
class MainArea extends HTMLElement {
  constructor() {
    super();
    this.attachShadow({ mode: 'open' });
    this.shadowRoot.innerHTML = `
      <style>
        :host { display: grid; grid-template-columns: 215px 1151px; height: 623px; flex: none; }
        .work { display: flex; flex-direction: column; min-width: 0; }
      </style>
      <slot name="nav"></slot>
      <div class="work"><slot></slot></div>
    `;
  }
}
customElements.define('main-area', MainArea);

class NavPanel extends HTMLElement {
  constructor() {
    super();
    this.attachShadow({ mode: 'open' });
  }
  connectedCallback() {
    this.shadowRoot.innerHTML = `
      <style>
        :host { display: flex; flex-direction: column; width: 211px; height: 621px; }
        .head { display: flex; align-items: center; height: 16px; flex: none; background: #0a55dc; color: #fff; padding-left: 1px; box-sizing: border-box; line-height: 15px; }
        .head svg { margin-left: auto; }
        .tree { margin: 1px 2px 1px 3px; flex: 1; min-height: 0; display: flex; flex-direction: column; border: 1px solid #8c8c8c; background: #fff; }
        .tools { display: flex; align-items: flex-start; gap: 3px; height: 28px; flex: none; padding: 3px 0 0 4px; box-sizing: border-box; }
        .body { flex: 1; min-height: 0; display: grid; grid-template-columns: 1fr 17px; }
        .rows { overflow: hidden; min-width: 0; }
        .sb { background: #f0f0f0; display: flex; flex-direction: column; align-items: center; }
        .sb .thumb { width: 100%; background: #cdcdcd; height: 365px; margin-top: 73px; flex: none; }
        .sb .arr { height: 17px; flex: none; }
        .sb .arr.b { margin-top: auto; }
      </style>
      <div class="head">${this.getAttribute('heading')}
        <svg width="60" height="15" viewBox="0 0 60 15"><path d="M19 2.500h6M20.500 2.500v5h3v-5M19 7.500h6M22 7.500v4" stroke="#fff" fill="none"/><path d="M39 3.500l8 8M47 3.500l-8 8" stroke="#fff"/></svg>
      </div>
      <slot name="top"></slot>
      <div class="tree">
        <div class="tools">
          <svg width="20" height="18" viewBox="0 0 20 18"><path d="M1 5h8M5 1v8M9 12h8M13 8v8" stroke="#0a5a3a" stroke-width="2.200"/></svg>
          <svg width="20" height="18" viewBox="0 0 20 18"><path d="M1 4h8M9 12h9" stroke="#0a5a3a" stroke-width="2.200"/></svg>
        </div>
        <div class="body">
          <div class="rows"><slot></slot></div>
          <div class="sb">
            <svg class="arr" width="12" height="10" viewBox="0 0 12 10"><path d="M2 7l4-4 4 4" stroke="#666" stroke-width="2" fill="none"/></svg>
            <div class="thumb"></div>
            <svg class="arr b" width="12" height="10" viewBox="0 0 12 10"><path d="M2 3l4 4 4-4" stroke="#666" stroke-width="2" fill="none"/></svg>
          </div>
        </div>
      </div>
      <slot name="bottom"></slot>
    `;
  }
}
customElements.define('nav-panel', NavPanel);

class NavTab extends HTMLElement {
  constructor() {
    super();
    this.attachShadow({ mode: 'open' });
    this.shadowRoot.innerHTML = `
      <style>
        :host { display: flex; align-items: center; justify-content: center; flex: none; height: 22px; margin: 0 0 0 1px; border: 1px solid #a8a8a8; background: #f0f0f0; box-sizing: border-box; }
        :host([slot=bottom]) { height: 21px; margin-bottom: 1px; }
      </style>
      <slot></slot>
    `;
  }
}
customElements.define('nav-tab', NavTab);

// Nodo del árbol: carpeta o elemento hoja
class TreeNode extends HTMLElement {
  constructor() {
    super();
    this.attachShadow({ mode: 'open' });
  }
  connectedCallback() {
    const leaf = this.hasAttribute('leaf');
    const open = this.hasAttribute('open');
    const last = this.hasAttribute('last');
    const key = this.getAttribute('key');
    const dots = 'stroke="#777" stroke-dasharray="1 1" fill="none"';
    const guide = leaf
      ? `<svg width="40" height="16"><path d="M12.500 0v16" ${dots}/><path d="M31.500 0v${last ? 8 : 16}M32 8.500h8" ${dots}/></svg>`
      : `<svg width="23" height="16"><path d="M12.500 0v16" ${dots}/><path d="M16 8.500h7" ${dots}/><path d="${open ? 'M7 6l4 4 4-4' : 'M9 4l4 4-4 4'}" stroke="${open ? '#555' : '#a8a8a8'}" stroke-width="1.600" fill="none"/></svg>`;
    const ic = leaf
      ? iconSvg(this.getAttribute('icon'))
      : `<svg width="16" height="16" viewBox="0 0 16 16"><defs><linearGradient id="f" x2="0" y2="1"><stop offset="0" stop-color="#fff3b8"/><stop offset="1" stop-color="#e0a830"/></linearGradient></defs>${open
          ? '<path d="M1 14V3h5l1 2h6v2" fill="#e8c060" stroke="#6e5a20"/><path d="M1 14l3-7h11l-3 7z" fill="url(#f)" stroke="#6e5a20"/>'
          : '<path d="M1 14V3h5l1 2h8v9z" fill="url(#f)" stroke="#6e5a20"/>'}</svg>`;
    this.shadowRoot.innerHTML = `
      <style>
        :host { display: flex; height: 16px; align-items: center; white-space: nowrap; color: #111; }
        svg { display: block; flex: none; }
        .it { display: flex; align-items: center; height: 16px; padding: 0 4px 0 3px; }
        :host([selected]) .it { background: #d8d8d8; }
        .it > span { margin-left: 4px; }
        b { font: 10px/16px "Liberation Mono", monospace; }
        .tag { display: flex; align-items: center; margin-left: 2px; }
        .new { font: bold 8px/8px "Liberation Sans", sans-serif; background: #ffe400; color: #222; padding: 0 1px; margin: -7px 0 0 1px; }
      </style>
      ${guide}
      <div class="it">${ic}<span><slot></slot>${key ? `<b>(${key})</b>` : ''}</span>${this.hasAttribute('fresh') ? `
        <div class="tag"><svg width="16" height="15" viewBox="0 0 16 15"><rect x=".5" y=".5" width="15" height="14" fill="#dfeaf6" stroke="#555"/><path d="M3 3h4v9H3zM9 3h4v9H9z" fill="#4a90d8"/><path d="M3 6h4M3 9h4M9 6h4M9 9h4" stroke="#fff"/></svg><span class="new">NEW</span></div>` : ''}
      </div>
    `;
  }
}
customElements.define('tree-node', TreeNode);

// Vista 3D: las coordenadas del viewBox son las de la ventana
class DrawingCanvas extends HTMLElement {
  constructor() {
    super();
    this.attachShadow({ mode: 'open' });
  }
  connectedCallback() {
    const bright = [
      [215,283,374,243],[215,350,386,307],[215,374,390,330],[215,428,795,280],[786,278,1232,168],
      [261,493,1366,213],[446,493,1366,260],[246,277,585,458],[215,472,258,493],[862,185,1121,320],
      [696,305,854,389],[862,185,930,168],[866,208,1025,168]
    ];
    const dark = [
      [215,324,381,282],[215,423,795,277],[786,275,1222,168],[350,249,378,263],[276,269,616,450],
      [507,333,674,420],[576,335,735,418],[616,327,770,408],[766,285,786,296],[930,168,1187,304],
      [1038,168,1260,285],[866,208,1091,328],[830,250,1018,348],[814,275,973,358],[786,289,936,368]
    ];
    const green = [
      [642,462,1365,279],[550,493,1365,289],[670,493,1365,318],
      [1121,320,1234,380],[1187,304,1299,364],[1260,285,1366,341],[1091,328,1204,388],[1018,348,1129,407],
      [973,358,1085,418],[936,368,1048,428],[854,389,967,448],[770,408,885,469],[735,418,848,478],
      [674,420,804,489],[585,458,651,493],[616,450,692,490],
      [1200,324,1223,312],[1274,306,1296,292],[1147,348,1172,333],[1105,348,1128,335],[1030,370,1052,355],
      [949,388,971,375],[867,409,891,396],[879,417,904,402],[786,428,810,416],[705,450,727,435],
      [622,467,653,457],[613,483,640,470]
    ];
    const lines = (arr, col) => arr.map(l => `<line x1="${l[0]}" y1="${l[1]}" x2="${l[2]}" y2="${l[3]}" stroke="${col}"/>`).join('');
    const marks = [['A',881,180],['B',974,180],['C',1181,180],['D',1352,214],['E',1352,261],['5',1245,386],['6',979,455],['7',628,480],['8',231,480]];
    const dims = [['900',1248,308],['924',1079,351],['538',1020,366],['3300',1040,381],['462',980,376],['1000',921,391],['1000',840,411],['924',679,453],['538',739,438],['462',780,427],['3300',771,450]];
    this.shadowRoot.innerHTML = `
      <style>
        :host { display: block; flex: none; height: 325px; background: #000; overflow: hidden; }
        svg { display: block; }
        text { font: 15px "Liberation Sans", sans-serif; fill: #c4c4c4; text-anchor: middle; }
      </style>
      <svg width="1151" height="325" viewBox="215 168 1151 325">
        <polygon points="359,168 540,168 572,333 481,332 390,330" fill="#6e6e6e"/>
        <polygon points="540,168 788,168 810,272 572,333" fill="#616161"/>
        <polygon points="788,168 857,168 865,207 810,272" fill="#6e6e6e"/>
        <polygon points="507,333 572,333 581,435 519,402" fill="#990099"/>
        <polygon points="565,333 766,284 785,384 585,434 583,436 581,435" fill="#800080"/>
        ${lines(dark, '#7a0000')}
        ${lines(green, '#087a08')}
        ${lines(bright, '#ff0000')}
        <circle cx="789" cy="331" r="144" fill="none" stroke="#a8a8a8"/>
        <g fill="none" stroke="#a8a8a8">
          <circle cx="789" cy="186" r="9"/><circle cx="645" cy="331" r="9"/><circle cx="934" cy="331" r="9"/><circle cx="789" cy="475" r="9"/>
        </g>
        ${marks.map(m => `<circle cx="${m[1]}" cy="${m[2]}" r="13" fill="none" stroke="#087a08"/><text x="${m[1]}" y="${m[2] + 5}">${m[0]}</text>`).join('')}
        ${dims.map(d => `<text x="${d[1]}" y="${d[2] + 5}">${d[0]}</text>`).join('')}
        <path d="M270 443L262 406" stroke="#0a78f0" stroke-width="4"/><path d="M259 397l-3 12 8-1z" fill="#0a78f0" stroke="#0a78f0"/>
        <path d="M270 443L232 451" stroke="#ff0000" stroke-width="4"/><path d="M224 453l12-6 1 8z" fill="#ff0000"/>
        <path d="M270 443L279 449" stroke="#00e000" stroke-width="3"/><circle cx="279" cy="449" r="4" fill="#00e000"/>
        <path d="M264 389h8l-8 9h8" stroke="#0a78f0" fill="none"/>
        <path d="M231 454l7 7M238 454l-7 7" stroke="#ff3030" fill="none"/>
        <path d="M264 449l4 4 4-4M268 453v5" stroke="#00c000" fill="none"/>
      </svg>
    `;
  }
}
customElements.define('drawing-canvas', DrawingCanvas);

// Panel inferior con la tabla de barras
class RebarPanel extends HTMLElement {
  constructor() {
    super();
    this.attachShadow({ mode: 'open' });
    this.shadowRoot.innerHTML = `
      <style>
        :host { display: grid; grid-template-columns: 12px 1fr; flex: 1; min-height: 0; border-bottom: 2px solid #b0b0b0; box-sizing: border-box; }
        .gut { background: radial-gradient(circle at 1px 1px, #b8b8b8 1px, transparent 1.200px) 2px 14px / 4px 5px #f0f0f0; }
        .gut svg { display: block; margin: -2px 0 0 0; background: #f0f0f0; }
        .cnt { display: flex; flex-direction: column; min-width: 0; }
      </style>
      <div class="gut"><svg width="11" height="12" viewBox="0 0 11 12"><rect x=".5" y="1.500" width="10" height="10" fill="#e8e0e0" stroke="#555"/><path d="M2 3l7 7M9 3l-7 7" stroke="#a04030" stroke-width="1.300"/></svg></div>
      <div class="cnt"><slot></slot></div>
    `;
  }
}
customElements.define('rebar-panel', RebarPanel);

class RebarGrid extends HTMLElement {
  constructor() {
    super();
    this.attachShadow({ mode: 'open' });
  }
  connectedCallback() {
    const cols = ['', '筋号', '直径<b>(mm)</b>', '级别', '图号', '图形', '计算公式', '公式描述', '长度<b>(mm)</b>', '根数', '搭接', '损耗<b>(%)</b>', '单重<b>(kg)</b>', '总重<b>(kg)</b>', '钢筋归类'];
    const widths = [33, 74, 56, 35, 34, 200, 167, 156, 61, 38, 39, 49, 61, 60, 73];
    this.shadowRoot.innerHTML = `
      <style>
        :host { display: flex; flex-direction: column; flex: 1; min-height: 0; background: #fff; }
        .t { display: grid; grid-template-columns: ${widths.map(w => w + 'px').join(' ')}; grid-template-rows: 20px 19px; width: 1136px; border-bottom: 1px solid #c0c0c0; box-sizing: border-box; }
        .h, .c { box-sizing: border-box; border-right: 1px solid #c4c4c4; border-bottom: 1px solid #c4c4c4; display: flex; align-items: center; justify-content: center; white-space: nowrap; overflow: hidden; padding-top: 2px; }
        .h { background: linear-gradient(#fdfdfd, #ebebeb); }
        .h.on { background: linear-gradient(#fde8bc, #f6c46c); color: #7c2c7c; }
        .c.rh { background: #fdd88c; color: #6a0a6a; font-family: "Liberation Mono", monospace; font-size: 11px; border-color: #d8c8a0; }
        .c.on { background: #d6e8f8; border-right: 1px solid #111; }
        b { font: 10px/16px "Liberation Mono", monospace; }
        .sp { flex: 1; }
        .hs { display: flex; align-items: center; height: 15px; flex: none; background: #f0f0f0; margin-bottom: 1px; }
        .hs .th { margin-left: 5px; width: 791px; height: 100%; background: #cdcdcd; }
        .hs svg { margin-left: 3px; flex: none; }
        .hs svg.r { margin-left: auto; margin-right: 7px; }
      </style>
      <div class="t">
        ${cols.map((c, i) => `<div class="h${i === 1 ? ' on' : ''}">${c}</div>`).join('')}
        ${cols.map((c, i) => `<div class="c${i === 0 ? ' rh' : ''}${i === 1 ? ' on' : ''}">${i === 0 ? '1*' : ''}</div>`).join('')}
      </div>
      <div class="sp"></div>
      <div class="hs">
        <svg width="9" height="11" viewBox="0 0 9 11"><path d="M7 1L3 5.500l4 4.500" stroke="#555" stroke-width="2" fill="none"/></svg>
        <div class="th"></div>
        <svg class="r" width="9" height="11" viewBox="0 0 9 11"><path d="M2 1l4 4.500L2 10" stroke="#555" stroke-width="2" fill="none"/></svg>
      </div>
    `;
  }
}
customElements.define('rebar-grid', RebarGrid);

// Barra de estado
class StatBar extends HTMLElement {
  constructor() {
    super();
    this.attachShadow({ mode: 'open' });
    this.shadowRoot.innerHTML = `
      <style>:host { display: flex; height: 21px; flex: none; padding-top: 1px; box-sizing: border-box; }</style>
      <slot></slot>
    `;
  }
}
customElements.define('stat-bar', StatBar);

class StatCell extends HTMLElement {
  constructor() {
    super();
    this.attachShadow({ mode: 'open' });
  }
  connectedCallback() {
    const label = this.getAttribute('label') || '';
    this.shadowRoot.innerHTML = `
      <style>
        :host { display: flex; align-items: center; flex: none; box-sizing: border-box; height: 19px; padding-left: 2px; border: 1px solid #dcdcdc; background: #f5f5f5; white-space: nowrap; }
        b { font: 10px/16px "Liberation Mono", monospace; }
      </style>
      ${label}<b><slot></slot></b>
    `;
  }
}
customElements.define('stat-cell', StatCell);

// Barra flotante del método de entrada, encima de la barra de estado
class ImeBar extends HTMLElement {
  constructor() {
    super();
    this.attachShadow({ mode: 'open' });
    this.shadowRoot.innerHTML = `
      <style>
        :host { position: absolute; left: 1182px; top: 701px; width: 184px; height: 27px; display: block; }
        .s { position: absolute; left: 0; top: 0; width: 26px; height: 25px; border-radius: 5px; background: #f4521e; color: #fff; font: bold 22px/25px "Liberation Sans", sans-serif; text-align: center; transform: rotate(-8deg); }
        .b { position: absolute; left: 26px; top: 4px; right: 0; height: 22px; background: #fff; border: 1px solid #d6e4f0; border-right: 0; box-sizing: border-box; display: flex; align-items: center; color: #1f70c0; }
        .b > * { flex: none; }
        .y { font-weight: bold; font-size: 14px; width: 30px; text-align: center; margin-left: 0; }
        svg { display: block; }
      </style>
      <div class="b">
        <span class="y">英</span>
        <svg width="20" height="16" viewBox="0 0 20 16"><circle cx="4" cy="6" r="1.500" fill="#1f70c0"/><path d="M11 6c2 1 1 4-1 5" stroke="#1f70c0" stroke-width="1.600" fill="none"/></svg>
        <svg width="22" height="18" viewBox="0 0 22 18"><rect x="8" y="0" width="6" height="11" rx="3" fill="#1f70c0"/><path d="M5 7c0 7 12 7 12 0M11 13v4M8 17h6" stroke="#1f70c0" stroke-width="1.300" fill="none"/></svg>
        <svg width="23" height="16" viewBox="0 0 23 16"><rect x="3" y="1" width="17" height="13" rx="2" fill="#1f70c0"/><path d="M5 4.500h13M5 7.500h13" stroke="#fff" stroke-dasharray="2 1"/><path d="M7 11h9" stroke="#fff"/></svg>
        <svg width="22" height="18" viewBox="0 0 22 18"><circle cx="10" cy="4" r="3" fill="#b0c0cc"/><path d="M5 16c0-9 10-9 10 0z" fill="#b0c0cc"/><text x="10" y="17" font-size="8" font-family="Liberation Sans" fill="#fff">17</text></svg>
        <svg width="22" height="18" viewBox="0 0 22 18"><path d="M7 1l4 1.500L15 1l5 4-2.500 3-1.500-1v10H6V7L4.500 8 2 5z" fill="#1f70c0"/></svg>
        <svg width="22" height="18" viewBox="0 0 22 18"><path d="M4 17l8-9c-1-4 2-7 6-6l-3 3 1 2 3 0 2-2c1 4-2 7-6 6l-8 8z" fill="#1f70c0"/></svg>
      </div>
      <div class="s">S</div>
    `;
  }
}
customElements.define('ime-bar', ImeBar);

// Barra de tareas de Windows
class WinTaskbar extends HTMLElement {
  constructor() {
    super();
    this.attachShadow({ mode: 'open' });
    this.shadowRoot.innerHTML = `
      <style>
        :host { display: flex; height: 40px; flex: none; background: #00070c; color: #fff; box-sizing: border-box; overflow: hidden; }
        svg { display: block; flex: none; }
        .start { width: 48px; background: #000; display: flex; align-items: center; justify-content: center; flex: none; }
        .search { width: 344px; background: #333; flex: none; display: flex; align-items: center; font-size: 14px; color: #9c9c9c; }
        .search .ph { margin-left: 6px; }
        .search .mic { margin-left: auto; margin-right: 13px; }
        .app { flex: none; height: 40px; width: 49px; display: flex; align-items: center; justify-content: center; box-sizing: border-box; }
        .app.run { border-bottom: 2px solid #76b9ed; background-clip: padding-box; }
        .app.cur { background: #394750; }
        .bar { width: 1px; height: 20px; background: #333; margin: 10px 12px 0 11px; flex: none; }
        .tray { margin-left: auto; display: flex; align-items: center; height: 40px; flex: none; }
        .tray > * { flex: none; }
        .cpu { width: 60px; text-align: center; color: #ddd; line-height: 18px; }
        .tray .m { display: flex; justify-content: center; align-items: center; }
        .clock { width: 62px; text-align: center; line-height: 19px; font-size: 13px; margin-left: 6px; color: #e8e8e8; }
        .not { width: 59px; background: #000; height: 40px; display: flex; align-items: center; justify-content: center; }
        .sg { width: 17px; height: 17px; border-radius: 3px; background: #f4521e; color: #fff; font: bold 15px/17px "Liberation Sans", sans-serif; text-align: center; transform: rotate(-8deg); }
      </style>
      <div class="start"><svg width="16" height="16" viewBox="0 0 16 16"><path d="M0 2.300L6.500 1.400V7.600H0zM7.300 1.300L16 0V7.600H7.300zM0 8.400H6.500V14.600L0 13.700zM7.300 8.400H16V16L7.300 14.700z" fill="#fff"/></svg></div>
      <div class="search">
        <svg style="margin-left:9px" width="22" height="22" viewBox="0 0 22 22"><circle cx="11" cy="11" r="8.500" fill="none" stroke="#d8d8d8" stroke-width="2.500"/></svg>
        <span class="ph">在这里输入你要搜索的内容</span>
        <svg class="mic" width="12" height="20" viewBox="0 0 12 20"><rect x="3.500" y="1" width="5" height="11" rx="2.500" fill="none" stroke="#999"/><path d="M1 8c0 7 10 7 10 0M6 14v4M3 18.500h6" stroke="#999" fill="none"/></svg>
      </div>
      <div class="app" style="width:50px"><svg width="22" height="26" viewBox="0 0 22 26"><path d="M10 13C3 13 0 9 1 5s8-5 9-1c1 3 0 6 0 9zM12 13c7 0 10-4 9-8s-8-5-9-1c-1 3 0 6 0 9zM10 13c-7 0-10 4-9 8s8 5 9 1c1-3 0-6 0-9zM12 13c7 0 10 4 9 8s-8 5-9 1c-1-3 0-6 0-9z" fill="#e8e8e8"/></svg></div>
      <div class="app" style="width:50px"><svg width="20" height="22" viewBox="0 0 20 22"><path d="M17 5C13 0 3 1 2 9s6 12 11 10 5-8 0-9-6 3-4 5" fill="none" stroke="#d8d8d8" stroke-width="1.600"/></svg></div>
      <div class="bar"></div>
      <div class="app"><svg width="20" height="26" viewBox="0 0 20 26"><path d="M3 13h14.500c.5-7-3-11-8-11S2 7 2 14s4 10 8.500 10c2.800 0 5-.8 6.500-2" fill="none" stroke="#0f7fdc" stroke-width="4"/></svg></div>
      <div class="app"><svg width="20" height="26" viewBox="0 0 20 26"><path d="M1 6h18v16H1z" fill="#fff"/><path d="M6 6c0-6 8-6 8 0" stroke="#fff" fill="none" stroke-width="1.500"/><path d="M6 10h3.500v3.500H6zM10.500 10H14v3.500h-3.500zM6 14.500h3.500V18H6zM10.500 14.500H14V18h-3.500z" fill="#111"/></svg></div>
      <div class="app run"><svg width="22" height="22" viewBox="0 0 22 22"><path d="M1 3h8l2 2h10v15H1z" fill="#f4d878"/><path d="M1 8h20v12H1z" fill="#f8e4a0"/><rect x="6" y="13" width="10" height="7" fill="#2a98d8"/></svg></div>
      <div class="app run"><svg width="24" height="26" viewBox="0 0 24 26"><path d="M14 1c-8-1-13 6-13 12s5 12 12 12 10-5 10-5l-4-3s-2 3-6 3-6-3-6-7 3-7 7-7l3 1 3-3z" fill="#1a90e8"/><path d="M12 11h9v4h-9z" fill="#1a90e8"/></svg></div>
      <div class="app run"><svg width="22" height="24" viewBox="0 0 22 24"><circle cx="11" cy="12" r="10.500" fill="#8ed24a" stroke="#d8f0b0"/><path d="M5 12h12c0-7-11-7-11.500 0 .5 6 8 7 11 3" fill="#fff" stroke="#3a9a2a" stroke-width="1.400"/></svg></div>
      <div class="app run"><svg width="24" height="26" viewBox="0 0 24 26"><rect x="1" y="1" width="22" height="24" rx="2" fill="#eca02c"/><path d="M5 5h13v17H5z" fill="#fbf0cc"/><path d="M7 9h9M7 12h9M7 15h9" stroke="#a08040"/><path d="M12 16l9-13 2 2-9 13z" fill="#c04a20"/></svg></div>
      <div class="app run cur"><svg width="24" height="26" viewBox="0 0 24 26"><rect width="24" height="26" rx="4" fill="#1e8ee8"/><path d="M12 4v15a3 3 0 0 0 3 3M4 10h15M4 10c0 5 4 6 8 6" stroke="#fff" stroke-width="2" fill="none"/></svg></div>
      <div class="tray">
        <div class="cpu">31%<br>CPU使用</div>
        <div class="m" style="width:24px;margin-left:8px"><svg width="14" height="8" viewBox="0 0 14 8"><path d="M1 7l6-6 6 6" stroke="#eee" fill="none" stroke-width="1.200"/></svg></div>
        <div class="m" style="width:26px"><svg width="18" height="16" viewBox="0 0 18 16"><rect x="3" y="5" width="13" height="9" fill="none" stroke="#ddd"/><rect x="5" y="7" width="9" height="5" fill="#ddd"/><path d="M5 0v4M9 0v4M3 4h8" stroke="#ddd"/></svg></div>
        <div class="m" style="width:22px"><svg width="16" height="16" viewBox="0 0 16 16"><path d="M1 15a14 14 0 0 1 14-14M4.500 15a10 10 0 0 1 10.500-10M8 15a6 6 0 0 1 7-6" stroke="#ccc" fill="none"/><circle cx="12" cy="14" r="1.500" fill="#ddd"/></svg></div>
        <div class="m" style="width:21px"><svg width="16" height="16" viewBox="0 0 16 16"><path d="M1 5h3l4-4v14l-4-4H1z" fill="none" stroke="#ddd"/><path d="M10 5c1 2 1 4 0 6M13 3c2 3 2 7 0 10" stroke="#ddd" fill="none"/></svg></div>
        <div class="m" style="width:36px"><svg width="23" height="17" viewBox="0 0 23 17"><rect x=".5" y=".5" width="22" height="16" fill="none" stroke="#eee"/><path d="M3 4h17M3 7.500h17M5 12h13" stroke="#eee" stroke-dasharray="1 1"/></svg></div>
        <div class="m" style="width:20px;font-size:14px;font-weight:bold">中</div>
        <div class="m" style="width:34px;margin-left:2px"><div class="sg">S</div></div>
        <div class="clock">21:28<br>2017/9/2</div>
        <div class="not"><svg width="16" height="17" viewBox="0 0 16 17"><path d="M.5.500h15v12h-5l-2.500 3-2.500-3h-5z" fill="none" stroke="#eee"/></svg></div>
      </div>
    `;
  }
}
customElements.define('win-taskbar', WinTaskbar);
</script>
</body>
</html>
